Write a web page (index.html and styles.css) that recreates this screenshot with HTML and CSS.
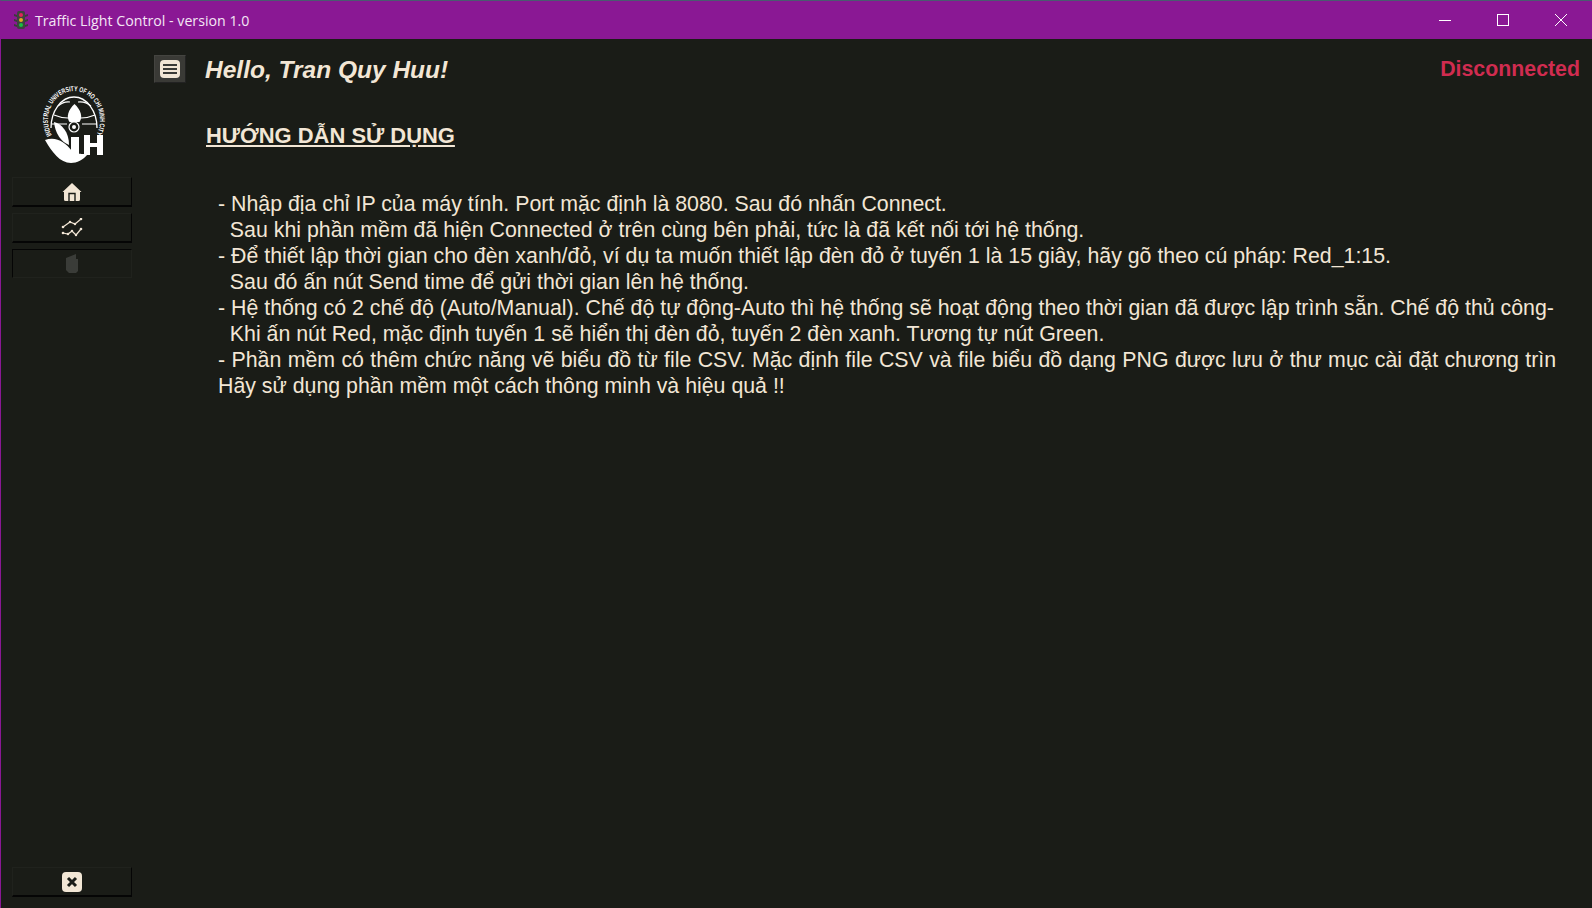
FILE: index.html

```html
<!DOCTYPE html>
<html lang="vi">
<head>
  <meta charset="UTF-8" />
  <title>Traffic Light Control - version 1.0</title>
  <link rel="stylesheet" href="styles.css">
</head>
<body>
  <div class="window">
    <div class="titlebar">
      <svg class="app-icon" width="14" height="20" viewBox="0 0 14 20">
        <path d="M0 4l3 1v2l-3-1zM14 4l-3 1v2l3-1zM0 9l3 1v2l-3-1zM14 9l-3 1v2l3-1zM0 14l3 1v2l-3-1zM14 14l-3 1v2l3-1z" fill="#3a3d3a"/>
        <rect x="3" y="1" width="8" height="18" rx="2" fill="#3f4340"/>
        <circle cx="7" cy="5" r="2" fill="#e0245e"/>
        <circle cx="7" cy="10" r="2" fill="#e8a820"/>
        <circle cx="7" cy="15" r="2" fill="#18c040"/>
      </svg>
      <span class="app-title">Traffic Light Control - version 1.0</span>
      <div class="win-controls">
        <svg class="win-btn" width="12" height="12" viewBox="0 0 12 12"><path d="M0 6.5h12" stroke="#fff" fill="none"/></svg>
        <svg class="win-btn" width="12" height="12" viewBox="0 0 12 12"><rect x="0.5" y="0.5" width="11" height="11" stroke="#fff" fill="none"/></svg>
        <svg class="win-btn" width="12" height="12" viewBox="0 0 12 12"><path d="M0 0l12 12M12 0l-12 12" stroke="#fff" fill="none"/></svg>
      </div>
    </div>

    <div class="main">
      <div class="sidebar">
        <svg class="logo" width="66" height="80" viewBox="0 0 66 80">
          <defs>
            <path id="logo-arc" d="M10.7 50A26 29 0 1 1 55.3 50"/>
          </defs>
          <text class="logo-text" textLength="116" lengthAdjust="spacingAndGlyphs"><textPath href="#logo-arc">INDUSTRIAL UNIVERSITY OF HO CHI MINH CITY</textPath></text>
          <!-- globe lines -->
          <path d="M10 43A23 31 0 0 1 56 43" stroke="#fff" stroke-width="1.3" fill="none"/>
          <path d="M17 21Q23 16 29 17M37 17Q44 16 50 21M13 30Q20 33 27 33M40 33Q47 33 54 30M11 39H26M41 39H56" stroke="#fff" stroke-width="1.1" fill="none"/>
          <path d="M33.5 19C40 25 42 32 38.5 37H28.5C25 32 27 25 33.5 19Z" fill="#fff"/>
          <circle cx="33" cy="42" r="5" fill="#1a1c17" stroke="#fff" stroke-width="1.2"/>
          <circle cx="33" cy="42" r="2" fill="#fff"/>
          <path d="M13 37C21 39 28 47 28 60C20 57 14 48 13 37Z" fill="#fff"/>
          <path d="M4 55C15 51 24 57 31 66C36 69 40 69 43 69H47C42 75 36 78 30 78C19 78 11 67 4 55Z" fill="#fff"/>
          <!-- the I and H of the mark -->
          <path d="M30 52H38V70H30ZM43 50H49V58H56V50H62V70H56V62H49V70H43Z" fill="#fff"/>
        </svg>

        <button class="nav-btn">
          <svg width="20" height="20" viewBox="0 0 20 20">
            <path d="M10 1L0.5 10H2V17.5Q2 19 3.5 19H16.5Q18 19 18 17.5V10H19.5Z" fill="#f2e6d5"/>
            <path d="M7 19V11.5H13V19" stroke="#1a1c17" stroke-width="1.4" fill="none"/>
          </svg>
        </button>
        <button class="nav-btn">
          <svg width="22" height="20" viewBox="0 0 22 20">
            <path d="M2 9L9 4L14 6L20 1M2 15L7 16L11 13L15 17L20 11" stroke="#f2e6d5" stroke-width="1.2" fill="none"/>
            <g fill="#f2e6d5"><circle cx="2" cy="9" r="1.3"/><circle cx="9" cy="4" r="1.2"/><circle cx="14" cy="6" r="1.2"/><circle cx="20" cy="1" r="1.3"/><circle cx="2" cy="15" r="1.3"/><circle cx="7" cy="16" r="1.2"/><circle cx="11" cy="13" r="1.2"/><circle cx="15" cy="17" r="1.2"/><circle cx="20" cy="11" r="1.3"/></g>
          </svg>
        </button>
        <button class="nav-btn nav-btn-off">
          <svg width="14" height="20" viewBox="0 0 14 20"><path d="M1 4L11 0V5H13V17L11 19H4L1 16Z" fill="#3a3c38"/></svg>
        </button>

        <button class="nav-btn nav-btn-exit">
          <svg width="20" height="20" viewBox="0 0 20 20">
            <rect width="20" height="20" rx="4" fill="#f2e6d5"/>
            <path d="M6 6l8 8M14 6l-8 8" stroke="#1a1c17" stroke-width="3"/>
          </svg>
        </button>
      </div>

      <div class="content">
        <div class="topbar">
          <button class="menu-btn">
            <svg width="20" height="18" viewBox="0 0 20 18">
              <rect width="20" height="18" rx="4" fill="#f2e6d5"/>
              <path d="M3 5h14M3 9h14M3 13h14" stroke="#3a3a36" stroke-width="2"/>
            </svg>
          </button>
          <div class="greeting">Hello, Tran Quy Huu!</div>
          <div class="status">Disconnected</div>
        </div>

        <h1 class="guide-title">HƯỚNG DẪN SỬ DỤNG</h1>

        <div class="guide-text">
          <div>- Nhập địa chỉ IP của máy tính. Port mặc định là 8080. Sau đó nhấn Connect.</div>
          <div>&nbsp; Sau khi phần mềm đã hiện Connected ở trên cùng bên phải, tức là đã kết nối tới hệ thống.</div>
          <div>- Để thiết lập thời gian cho đèn xanh/đỏ, ví dụ ta muốn thiết lập đèn đỏ ở tuyến 1 là 15 giây, hãy gõ theo cú pháp: Red_1:15.</div>
          <div>&nbsp; Sau đó ấn nút Send time để gửi thời gian lên hệ thống.</div>
          <div>- Hệ thống có 2 chế độ (Auto/Manual). Chế độ tự động-Auto thì hệ thống sẽ hoạt động theo thời gian đã được lập trình sẵn. Chế độ thủ công-</div>
          <div>&nbsp; Khi ấn nút Red, mặc định tuyến 1 sẽ hiển thị đèn đỏ, tuyến 2 đèn xanh. Tương tự nút Green.</div>
          <div class="line-wide">- Phần mềm có thêm chức năng vẽ biểu đồ từ file CSV. Mặc định file CSV và file biểu đồ dạng PNG được lưu ở thư mục cài đặt chương trìn</div>
          <div>Hãy sử dụng phần mềm một cách thông minh và hiệu quả !!</div>
        </div>
      </div>
    </div>
  </div>
</body>
</html>
```

FILE: styles.css

```css
html, body {
  margin: 0;
  height: 100%;
  overflow: hidden;
}
body {
  font-family: "Liberation Sans", Arial, sans-serif;
  background-color: #1a1c17;
}
.window {
  height: 100%;
  box-sizing: border-box;
  display: flex;
  flex-direction: column;
  border-left: 1px solid #8a1894;
  border-top: 1px solid #4a5a70;
}
.titlebar {
  height: 38px;
  flex: none;
  background-color: #8a1894;
  color: #f4e6f4;
  display: flex;
  align-items: center;
  padding-left: 13px;
}
.app-icon {
  margin-right: 7px;
}
.app-title {
  font-family: "Open Sans", sans-serif;
  font-size: 14.2px;
}
.win-controls {
  margin-left: auto;
  display: flex;
  gap: 46px;
  padding-right: 25px;
}
.main {
  flex: 1;
  display: flex;
  min-height: 0;
}
.sidebar {
  width: 142px;
  padding: 0 0 11px 11px;
  flex: none;
  display: flex;
  flex-direction: column;
  gap: 6px;
}
.logo {
  margin: 46px 0 6px 29px;
}
.logo-text {
  font-family: "Liberation Sans", sans-serif;
  font-size: 7px;
  font-weight: bold;
  fill: #fff;
}
.nav-btn {
  width: 120px;
  height: 30px;
  padding: 0;
  background: transparent;
  border: 1px solid #20221d;
  border-right-color: #050505;
  border-bottom: 2px solid #050505;
  display: flex;
  align-items: center;
  justify-content: center;
}
.nav-btn-off {
  height: 29px;
  border-color: #050505;
  border-right-color: #20221d;
  border-bottom: 1px solid #20221d;
}
.nav-btn-exit {
  margin-top: auto;
}
.content {
  flex: 1;
  min-width: 0;
  padding: 15px 12px 0 0;
}
.topbar {
  display: flex;
  align-items: center;
  height: 30px;
}
.menu-btn {
  width: 32px;
  height: 28px;
  padding: 0;
  margin-right: 19px;
  background: #3a3a36;
  border: 1px solid #444440;
  border-right-color: #222;
  border-bottom-color: #222;
  display: flex;
  align-items: center;
  justify-content: center;
}
.greeting {
  padding-top: 1px;
  font-size: 24.5px;
  font-weight: bold;
  font-style: italic;
  color: #f2e6d5;
}
.status {
  margin-left: auto;
  padding-top: 1px;
  font-size: 21.33px;
  font-weight: bold;
  color: #d02c50;
}
.guide-title {
  margin: 39px 0 0 52px;
  font-size: 21.95px;
  line-height: 26px;
  font-weight: bold;
  text-decoration: underline;
  color: #f2e6d5;
}
.guide-text {
  margin: 42px 0 0 64px;
  font-size: 21.33px;
  line-height: 26px;
  color: #f2e6d5;
  white-space: nowrap;
}
.line-wide {
  word-spacing: 0.45px;
}
```
